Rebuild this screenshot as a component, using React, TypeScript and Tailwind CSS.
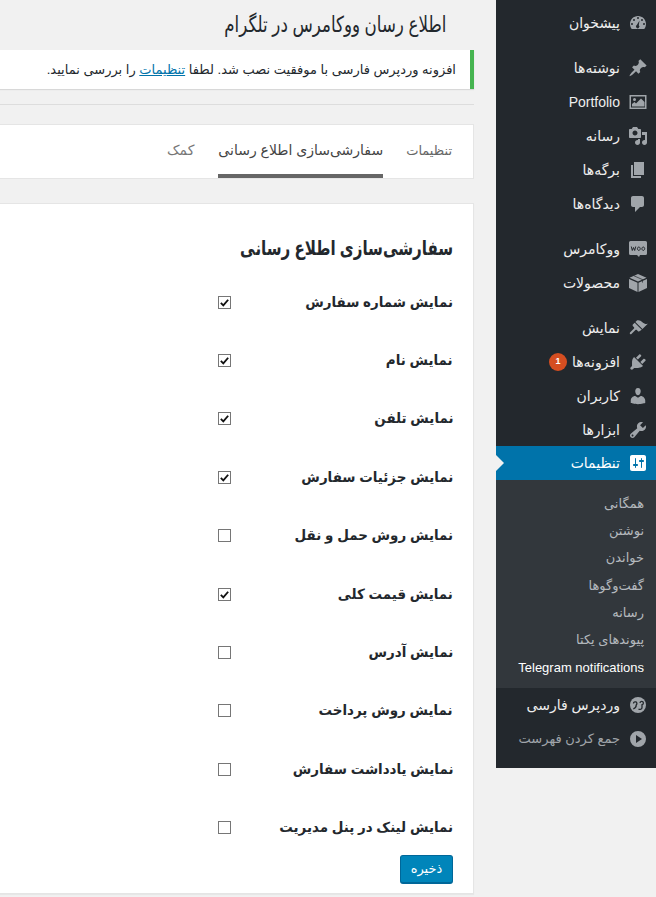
const FONT = "font-['Tahoma','Liberation_Sans','DejaVu_Sans',sans-serif]";

function DashIcon({ children }: { children: React.ReactNode }) {
  return (
    <svg viewBox="0 0 20 20" className="h-5 w-5 shrink-0 fill-[#a0a5aa]">
      {children}
    </svg>
  );
}

const icons: Record<string, React.ReactNode> = {
  dashboard: (
    <path fillRule="evenodd" d="M3.760 16h12.480C17.340 14.570 18 12.860 18 11c0-4.420-3.580-8-8-8s-8 3.580-8 8c0 1.860.660 3.570 1.760 5zM10 4a1 1 0 1 1 0 2 1 1 0 0 1 0-2zM6 6a1 1 0 1 1 0 2 1 1 0 0 1 0-2zM14 6a1 1 0 1 1 0 2 1 1 0 0 1 0-2zM4 10a1 1 0 1 1 0 2 1 1 0 0 1 0-2zM16 10a1 1 0 1 1 0 2 1 1 0 0 1 0-2zM11.500 7.500L10.800 12.300a1.700 1.700 0 1 1-2-.2z" />
  ),
  pin: (
    <path d="M10.440 3.020l1.820-1.820 6.360 6.350-1.830 1.820c-1.050-.68-2.480-.57-3.410.36l-.75.750c-.92.93-1.040 2.350-.35 3.410l-1.830 1.820-2.410-2.420-2.830 2.830c-.39.390-3.180 2.390-3.570 2-.39-.39 1.610-3.180 2-3.570l2.830-2.830-2.410-2.410 1.830-1.830c1.050.69 2.480.57 3.400-.35l.75-.75c.93-.92 1.050-2.350.37-3.370z" />
  ),
  media: (
    <path fillRule="evenodd" d="M1.500 3h17v14h-17zM3 4.500v11h14v-11zM4 14.500V12l2.500-2 1.500 1.500L13 6.500l3.500 3.500v4.500zM6.500 6a1.500 1.500 0 1 1 0 3 1.500 1.500 0 0 1 0-3z" />
  ),
  audio: (
    <path fillRule="evenodd" d="M13 11V4c0-.55-.45-1-1-1h-1.670L9 1H5L3.670 3H2c-.55 0-1 .45-1 1v7c0 .55.45 1 1 1h10c.55 0 1-.45 1-1zM7 4.500c1.380 0 2.500 1.120 2.500 2.500S8.380 9.500 7 9.500 4.500 8.380 4.500 7 5.620 4.500 7 4.500zM14 6h5v10.500c0 1.380-1.120 2.500-2.500 2.500S14 17.880 14 16.500s1.120-2.500 2.500-2.500c.17 0 .34.020.5.050V9h-3V6zm-4 8.050V13h2v3.500c0 1.380-1.120 2.500-2.500 2.500S7 17.880 7 16.500 8.120 14 9.500 14c.17 0 .34.020.5.050z" />
  ),
  pages: <path d="M6 15V2h10v13H6zm-1 1h8v2H3V5h2v11z" />,
  comment: (
    <path d="M5 2h9c1.100 0 2 .9 2 2v7c0 1.100-.9 2-2 2h-2l-5 5v-5H5c-1.100 0-2-.9-2-2V4c0-1.100.9-2 2-2z" />
  ),
  woo: (
    <>
      <path d="M2.500 2h15A1.500 1.500 0 0 1 19 3.500v11a1.500 1.500 0 0 1-1.500 1.500H12l-1 2-2-2H2.500A1.500 1.500 0 0 1 1 14.500v-11A1.500 1.500 0 0 1 2.500 2z" />
      <path d="M3.300 7.500l1 4 1.200-3 1.200 3 1-4M10.800 8a1.400 1.700 0 1 0 .01 0M15.300 8a1.400 1.700 0 1 0 .01 0" className="fill-none stroke-[#23282d]" strokeWidth="1" />
    </>
  ),
  box: (
    <>
      <path d="M10 1l8.500 3.800L10 8.600 1.500 4.800zM1 6l8.500 3.800V19L1 15zM19 6v9l-8.500 4V9.800z" />
      <path d="M6 2.800l8.500 3.800v3" className="fill-none stroke-[#23282d]" strokeWidth="0.700" />
    </>
  ),
  brush: (
    <path d="M14.480 11.060L7.410 3.990l1.500-1.500c.5-.56 2.300-.47 3.510.32 1.210.8 1.430 1.280 2.910 2.100 1.180.64 2.450 1.260 4.450.85zm-.71.71L6.700 4.700 4.830 6.580c-.39.39-.39 1.020 0 1.410l1.170 1.170c.39.39.39 1.030 0 1.420l-4 4a1 1 0 0 0 1.410 1.410l4-4c.39-.39 1.030-.39 1.420 0l1.170 1.170c.39.39 1.020.39 1.410 0z" />
  ),
  plug: (
    <path d="M13.110 4.360L9.870 7.600 8 5.730l3.240-3.240c.35-.34 1.050-.2 1.560.32.52.51.66 1.210.31 1.550zm-8 1.770l.91-1.120 9.010 9.010-1.190.84c-.71.71-2.630 1.160-3.820 1.160H6.140L4.900 17.260c-.59.59-1.540.59-2.120 0-.59-.58-.59-1.530 0-2.120l1.240-1.240v-3.880c0-1.130.4-3.190 1.090-3.890zm7.260 3.970l3.240-3.240c.34-.35 1.040-.21 1.550.31.52.51.66 1.210.31 1.550l-3.240 3.250z" />
  ),
  user: (
    <path d="M10 9.250c-2.270 0-2.730-3.440-2.730-3.440C7 4.020 7.820 2 9.970 2c2.160 0 2.980 2.020 2.710 3.810 0 0-.41 3.440-2.680 3.440zm0 2.570L12.720 10c2.390 0 4.520 2.330 4.520 4.530v2.490s-3.650 1.130-7.240 1.130c-3.650 0-7.240-1.130-7.240-1.130v-2.490c0-2.250 1.940-4.480 4.460-4.480z" />
  ),
  wrench: (
    <path fillRule="evenodd" d="M16.680 9.770c-1.340 1.340-3.300 1.670-4.950.99l-5.410 6.520c-.99.99-2.590.99-3.580 0s-.99-2.590 0-3.570l6.520-5.420c-.68-1.650-.35-3.610.99-4.950 1.280-1.280 3.120-1.620 4.720-1.060l-2.890 2.890 2.820 2.820 2.860-2.860c.53 1.580.18 3.400-1.080 4.640zM3.810 16.210c.4.390 1.030.39 1.420 0 .4-.4.400-1.030 0-1.430-.39-.39-1.020-.39-1.420 0-.39.4-.39 1.030 0 1.430z" />
  ),
  settings: (
    <path fillRule="evenodd" d="M18 16V4c0-1.100-.9-2-2-2H4c-1.100 0-2 .9-2 2v12c0 1.100.9 2 2 2h12c1.100 0 2-.9 2-2zM8 11h1c.55 0 1 .45 1 1s-.45 1-1 1H8v1.500c0 .28-.22.5-.5.5s-.5-.22-.5-.5V13H6c-.55 0-1-.45-1-1s.45-1 1-1h1V5.500c0-.28.22-.5.5-.5s.5.22.5.5V11zm5-2h-1c-.55 0-1-.45-1-1s.45-1 1-1h1V5.500c0-.28.22-.5.5-.5s.5.22.5.5V7h1c.55 0 1 .45 1 1s-.45 1-1 1h-1v5.500c0 .28-.22.5-.5.5s-.5-.22-.5-.5V9z" />
  ),
  parsi: (
    <>
      <circle cx="10" cy="10" r="8" />
      <path d="M5.500 8.500a1.700 1.700 0 1 1 2.800 1.300c0 2-1 3.500-3 4M12 8a1.700 1.700 0 1 1 2 1.700v2.800c0 1.800-2 2.300-3.500 1.700" className="fill-none stroke-[#23282d]" strokeWidth="1.300" />
    </>
  ),
  collapse: <path fillRule="evenodd" d="M10 2a8 8 0 1 1 0 16 8 8 0 0 1 0-16zM8 6v8l6-4z" />,
};

function MenuItem({
  icon,
  label,
  active,
  muted,
  badge,
  mt,
}: {
  icon: string;
  label: string;
  active?: boolean;
  muted?: boolean;
  badge?: string;
  mt?: string;
}) {
  return (
    <div
      className={`relative flex h-[34px] items-center ${muted ? "text-[13px]" : "text-[14px]"} ${mt ?? ""} ${
        active ? "bg-[#0073aa] text-white" : muted ? "text-[#a0a5aa]" : "text-[#eeeeee]"
      }`}
    >
      <span className="flex w-[36px] justify-center">
        {active ? (
          <svg viewBox="0 0 20 20" className="h-5 w-5 shrink-0 fill-white">
            {icons[icon]}
          </svg>
        ) : (
          <DashIcon>{icons[icon]}</DashIcon>
        )}
      </span>
      <span className="whitespace-nowrap">{label}</span>
      {badge && (
        <span className="mr-[5px] flex h-[18px] w-[18px] items-center justify-center rounded-full bg-[#d54e21] text-[9px] font-bold text-white">
          {badge}
        </span>
      )}
      {active && (
        <span className="absolute left-0 top-[9px] h-0 w-0 border-y-[8px] border-l-[8px] border-y-transparent border-l-[#f1f1f1]" />
      )}
    </div>
  );
}

const subItems = ["همگانی", "نوشتن", "خواندن", "گفت‌وگوها", "رسانه", "پیوندهای یکتا"];

function Sidebar() {
  return (
    <aside className="h-[768px] w-[160px] shrink-0 bg-[#23282d] pt-[6px]">
      <MenuItem icon="dashboard" label="پیشخوان" />
      <MenuItem icon="pin" label="نوشته‌ها" mt="mt-[11px]" />
      <MenuItem icon="media" label="Portfolio" />
      <MenuItem icon="audio" label="رسانه" />
      <MenuItem icon="pages" label="برگه‌ها" />
      <MenuItem icon="comment" label="دیدگاه‌ها" />
      <MenuItem icon="woo" label="ووکامرس" mt="mt-[11px]" />
      <MenuItem icon="box" label="محصولات" />
      <MenuItem icon="brush" label="نمایش" mt="mt-[11px]" />
      <MenuItem icon="plug" label="افزونه‌ها" badge="1" />
      <MenuItem icon="user" label="کاربران" />
      <MenuItem icon="wrench" label="ابزارها" />
      <MenuItem icon="settings" label="تنظیمات" active mt="mt-[-1px]" />
      <div className="bg-[#32373c] pb-[7px] pt-[10px] text-[13px] text-[#b4b9be]">
        {subItems.map((s) => (
          <div key={s} className="flex h-[27.3px] items-center pr-[12px]">
            {s}
          </div>
        ))}
        <div className="flex h-[27.3px] items-center pr-[12px] font-['Liberation_Sans',sans-serif] text-[#fff]">
          Telegram notifications
        </div>
      </div>
      <MenuItem icon="parsi" label="وردپرس فارسی" />
      <MenuItem icon="collapse" label="جمع کردن فهرست" muted />
    </aside>
  );
}

const rows: [string, boolean][] = [
  ["نمایش شماره سفارش", true],
  ["نمایش نام", true],
  ["نمایش تلفن", true],
  ["نمایش جزئیات سفارش", true],
  ["نمایش روش حمل و نقل", false],
  ["نمایش قیمت کلی", true],
  ["نمایش آدرس", false],
  ["نمایش روش پرداخت", false],
  ["نمایش یادداشت سفارش", false],
  ["نمایش لینک در پنل مدیریت", false],
];

function Checkbox({ checked }: { checked: boolean }) {
  return (
    <span className="flex h-[13px] w-[13px] items-center justify-center border border-[#767676] bg-white">
      {checked && (
        <svg viewBox="0 0 12 12" className="h-[11px] w-[11px]">
          <path d="M2 6.500l2.700 2.700L10 3" className="fill-none stroke-[#111]" strokeWidth="2" />
        </svg>
      )}
    </span>
  );
}

function Content() {
  return (
    <main className="min-w-0 flex-1 pr-[22px] text-[#23282d]">
      <h1 className="pr-[28px] pt-[10px] text-[22px] leading-[29px] font-normal">
        <span className="inline-block origin-right scale-x-[0.757] whitespace-nowrap">
          اطلاع رسان ووکامرس در تلگرام
        </span>
      </h1>
      <div className="mt-[11px] flex h-[39px] items-center border-r-4 border-[#46b450] bg-white pr-[14px] text-[13px] shadow-[0_1px_1px_rgba(0,0,0,0.1)]">
        افزونه وردپرس فارسی با موفقیت نصب شد. لطفا&nbsp;
        <a className="text-[#0073aa] underline">تنظیمات</a>
        &nbsp;را بررسی نمایید.
      </div>
      <div className="mt-[15px] h-px bg-[#dddddd]" />
      <div className="mt-[19px] flex h-[55px] items-stretch border-y border-r border-[#e5e5e5] bg-white pr-[21px] text-[14px] text-[#666]">
        <span className="flex items-center pb-[2px] text-[13px]">تنظیمات</span>
        <span className="mr-[23px] flex items-center border-b-4 border-[#666] pt-[2px] text-[#444]">
          سفارشی‌سازی اطلاع رسانی
        </span>
        <span className="mr-[24px] flex items-center pb-[2px] text-[#777]">کمک</span>
      </div>
      <section className="mt-[24px] h-[691px] border-y border-r border-[#e5e5e5] bg-white pr-[20px] shadow-[0_1px_1px_rgba(0,0,0,0.04)]">
        <h2 className="pt-[30px] text-[20px] leading-[28px] font-bold">
          <span className="inline-block origin-right scale-x-[0.755] whitespace-nowrap">
            سفارشی‌سازی اطلاع رسانی
          </span>
        </h2>
        <div className="mt-[11px]">
          {rows.map(([label, checked]) => (
            <div key={label} className="flex h-[58.4px] items-center text-[14px] font-bold">
              <span className="w-[222px] shrink-0 whitespace-nowrap">
                <span className="inline-block origin-right scale-x-[0.96]">{label}</span>
              </span>
              <Checkbox checked={checked} />
            </div>
          ))}
        </div>
        <button className="mt-[-2px] block h-[29px] w-[53px] rounded-[3px] border border-[#006799] border-b-2 bg-[#0085ba] text-[13px] text-white">
          ذخیره
        </button>
      </section>
    </main>
  );
}

export default function App() {
  return (
    <div dir="rtl" className={`flex h-[897px] w-full overflow-hidden bg-[#f1f1f1] ${FONT}`}>
      <Sidebar />
      <Content />
    </div>
  );
}
